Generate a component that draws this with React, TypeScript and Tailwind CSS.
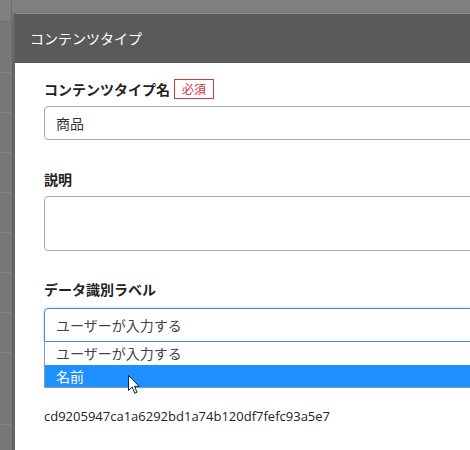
import React from 'react';

const jp = { fontFamily: '"Noto Sans CJK JP", "Noto Sans", sans-serif' };

function Cursor() {
  return (
    <svg width="13" height="20" viewBox="0 0 13 20" className="absolute left-[128px] top-[375px] z-20">
      <path d="M0.5 0.5 L0.5 15.5 L4.2 12 L6.8 18.2 L9 17.2 L6.5 11.3 L11.2 11.3 Z" fill="#fff" stroke="#0b2b2f" strokeWidth="1" strokeLinejoin="round" />
    </svg>
  );
}

export default function App() {
  const rows = [72, 112, 152, 192, 232, 272, 312, 352];

  return (
    <div className="relative h-[450px] w-[470px] overflow-hidden bg-[#7f7f7f]" style={jp}>
      {/* page behind the overlay */}
      <div className="flex h-full w-[13px] flex-col">
        <div className="h-[22px] w-[12px] rounded-br-[3px] border-r border-b border-[#6c6c6c] bg-[#808080]" />
        <div className="relative flex-1 border-r border-[#6c6c6c] bg-[#777777]">
          {rows.map((y) => (
            <div key={y} className="absolute left-0 h-px w-[11px] bg-[#858585]" style={{ top: y - 22 }} />
          ))}
          <div className="absolute left-0 top-[402px] h-px w-[11px] bg-[#858585]" />
        </div>
      </div>

      {/* modal */}
      <div className="absolute left-[15px] top-[13px] z-10 w-[540px] bg-white shadow-[-2px_0_2px_rgba(0,0,0,0.25)]">
        <div className="flex h-[50px] items-center border-t border-[#8c8c8c] bg-[#5a5a5a] pl-[15px] text-[14px] text-white">
          コンテンツタイプ
        </div>

        <div className="relative h-[400px] pl-[29px] pr-[20px] pt-[16px]">
          <div className="mb-[7px] flex h-[20px] items-center">
            <span className="text-[14px] font-bold leading-[20px] text-[#222]">コンテンツタイプ名</span>
            <span className="ml-[4px] flex h-[20px] items-center border border-[#d9363e] px-[7px] text-[12px] leading-none text-[#d0343a]">
              必須
            </span>
          </div>
          <div className="flex h-[34px] items-center rounded-[4px] border border-[#a8a8a8] pl-[11px] text-[14px] text-[#333]">
            商品
          </div>

          <div className="mt-[29px] mb-[7px] h-[20px] text-[14px] font-bold leading-[20px] text-[#222]">説明</div>
          <div className="h-[55px] rounded-[4px] border border-[#a8a8a8]" />

          <div className="mt-[28px] mb-[9px] h-[20px] text-[14px] font-bold leading-[20px] text-[#222]">データ識別ラベル</div>
          <div className="relative">
            <div className="flex h-[34px] items-center rounded-t-[4px] border border-[#3b8fe8] pl-[11px] text-[14px] text-[#444] shadow-[0_0_3px_rgba(59,143,232,0.45)]">
              ユーザーが入力する
            </div>
            <div className="absolute left-0 right-0 top-[34px] z-10 flex flex-col border border-t-0 border-[#7b9cc8] bg-white text-[14px]">
              <div className="flex h-[23px] items-center pl-[11px] text-[#444]">ユーザーが入力する</div>
              <div className="flex h-[22px] items-center bg-[#1e90ff] pl-[11px] text-white">名前</div>
            </div>
          </div>

          <div className="mt-[65px] text-[13px] leading-[18px] text-[#222]" style={{ fontFamily: '"Open Sans", Arial, sans-serif' }}>
            cd9205947ca1a6292bd1a74b120df7fefc93a5e7
          </div>
        </div>
      </div>

      <Cursor />
    </div>
  );
}
